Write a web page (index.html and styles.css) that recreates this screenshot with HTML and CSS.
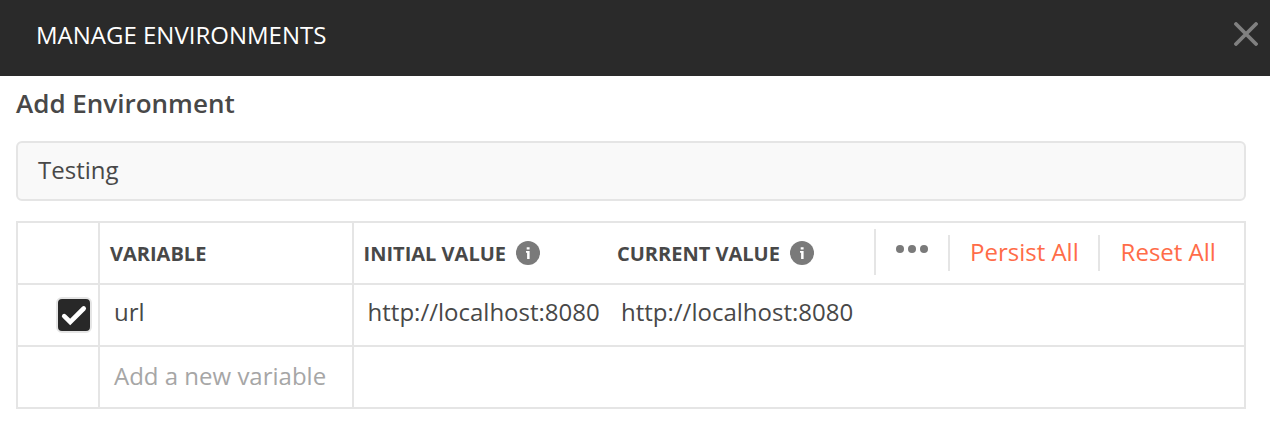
FILE: index.html
```html
<!DOCTYPE html>
<html lang="en">
<head>
<meta charset="utf-8">
<title>Manage Environments</title>
<link rel="stylesheet" href="styles.css">
</head>
<body>
<header class="modal-header">
  <h1 class="modal-title">MANAGE ENVIRONMENTS</h1>
  <svg class="close" viewBox="0 0 24 24"><path d="M2 2 22 22M22 2 2 22"/></svg>
</header>
<main class="content">
  <h2 class="subtitle">Add Environment</h2>
  <div class="name-input"><span class="name-text">Testing</span></div>
  <div class="table">
    <div class="row head">
      <div class="cell check"></div>
      <div class="cell variable"><span class="label label-variable">VARIABLE</span></div>
      <div class="cell initial"><span class="label label-initial">INITIAL VALUE</span>
        <svg class="info" viewBox="0 0 24 24"><circle cx="12" cy="12" r="12"/><path d="M10.7 6.3h2.9v2.3h-2.9zM10 10h3.6v8h-2.5v-6.3H10z"/></svg>
      </div>
      <div class="cell current"><span class="label label-current">CURRENT VALUE</span>
        <svg class="info" viewBox="0 0 24 24"><circle cx="12" cy="12" r="12"/><path d="M10.7 6.3h2.9v2.3h-2.9zM10 10h3.6v8h-2.5v-6.3H10z"/></svg>
      </div>
      <div class="actions">
        <div class="more"><svg class="dots" viewBox="0 0 32 8"><circle cx="4" cy="4" r="4"/><circle cx="16" cy="4" r="4"/><circle cx="28" cy="4" r="4"/></svg></div>
        <div class="action persist"><span class="link-persist">Persist All</span></div>
        <div class="action reset"><span class="link-reset">Reset All</span></div>
      </div>
    </div>
    <div class="row">
      <div class="cell check"><span class="checkbox"><svg class="tick" viewBox="0 0 32 32"><path d="M6.2 17.2 12.2 23 25.7 9.5"/></svg></span></div>
      <div class="cell variable"><span class="value">url</span></div>
      <div class="cell initial"><span class="value">http://localhost:8080</span></div>
      <div class="cell current"><span class="value">http://localhost:8080</span></div>
    </div>
    <div class="row new">
      <div class="cell check"></div>
      <div class="cell variable"><span class="value placeholder">Add a new variable</span></div>
      <div class="cell initial"></div>
      <div class="cell current"></div>
    </div>
  </div>
</main>
</body>
</html>
```
FILE: styles.css
```css
* { box-sizing: border-box; }
body {
  margin: 0;
  background: #fff;
  color: #484848;
  font-family: "Open Sans", "Noto Sans", sans-serif;
  font-size: 24px;
  line-height: 34px;
  white-space: nowrap;
}
.modal-header {
  display: flex;
  justify-content: space-between;
  align-items: flex-start;
  height: 76px;
  padding: 18px 12px 0 36px;
  background: #2a2a2a;
}
.modal-title {
  margin: 0;
  color: #fff;
  font-size: 24px;
  font-weight: 400;
}
.close {
  width: 24px;
  height: 24px;
  margin-top: 4px;
  fill: none;
  stroke: #808080;
  stroke-width: 3.8;
  stroke-linecap: round;
}
.content { padding: 10px 24px 0 16px; }
.subtitle {
  margin: 0 0 21px;
  font-size: 26px;
  font-weight: 600;
}
.name-input {
  height: 60px;
  padding: 10px 20px;
  border: 2px solid #e5e5e5;
  border-radius: 6px;
  background: #f9f9f9;
}
.table {
  margin-top: 20px;
  border: 2px solid #e5e5e5;
}
.row {
  display: grid;
  grid-template-columns: 82px 254px 254px 1fr;
  height: 62px;
  border-bottom: 2px solid #e5e5e5;
}
.row.head { grid-template-columns: 82px 254px 254px 266px 1fr; }
.row:last-child { height: 60px; border-bottom: 0; }
.cell { display: flex; padding: 10px 0 0 14px; }
.cell.initial { padding-left: 13.6px; }
.cell.current { padding-left: 13px; }
.check, .variable { border-right: 2px solid #e5e5e5; }
.head .cell { padding: 14px 0 0 10px; }
.head .initial { padding-left: 9.6px; }
.head .current { padding-left: 9px; }
.label { font-size: 20px; font-weight: 700; }
.info {
  width: 24px;
  height: 24px;
  margin: 4px 0 0 10px;
}
.initial .info { margin-left: 10.4px; }
.info circle { fill: #7a7a7a; }
.info path { fill: #fff; }
.row .check { justify-content: flex-end; padding: 12px 6px 0 0; }
.checkbox {
  width: 36px;
  height: 36px;
  border: 2px solid #e5e5e5;
  border-radius: 6px;
  background: #282828;
}
.tick {
  display: block;
  width: 32px;
  height: 32px;
  fill: none;
  stroke: #fff;
  stroke-width: 4.6;
  stroke-linecap: round;
}
.new .cell { padding-top: 12px; }
.placeholder { color: #a6a6a6; }
.actions { display: flex; padding-top: 6px; }
.more {
  width: 74px;
  height: 46px;
  padding: 16px 0 0 20px;
  border-left: 2px solid #e5e5e5;
}
.dots { display: block; width: 32px; height: 8px; fill: #7a7a7a; }
.action {
  height: 36px;
  margin-top: 6px;
  padding-left: 20px;
  border-left: 2px solid #e5e5e5;
  color: #ff6c48;
}
.persist { width: 150px; }
.reset { padding-left: 20.6px; }
```
